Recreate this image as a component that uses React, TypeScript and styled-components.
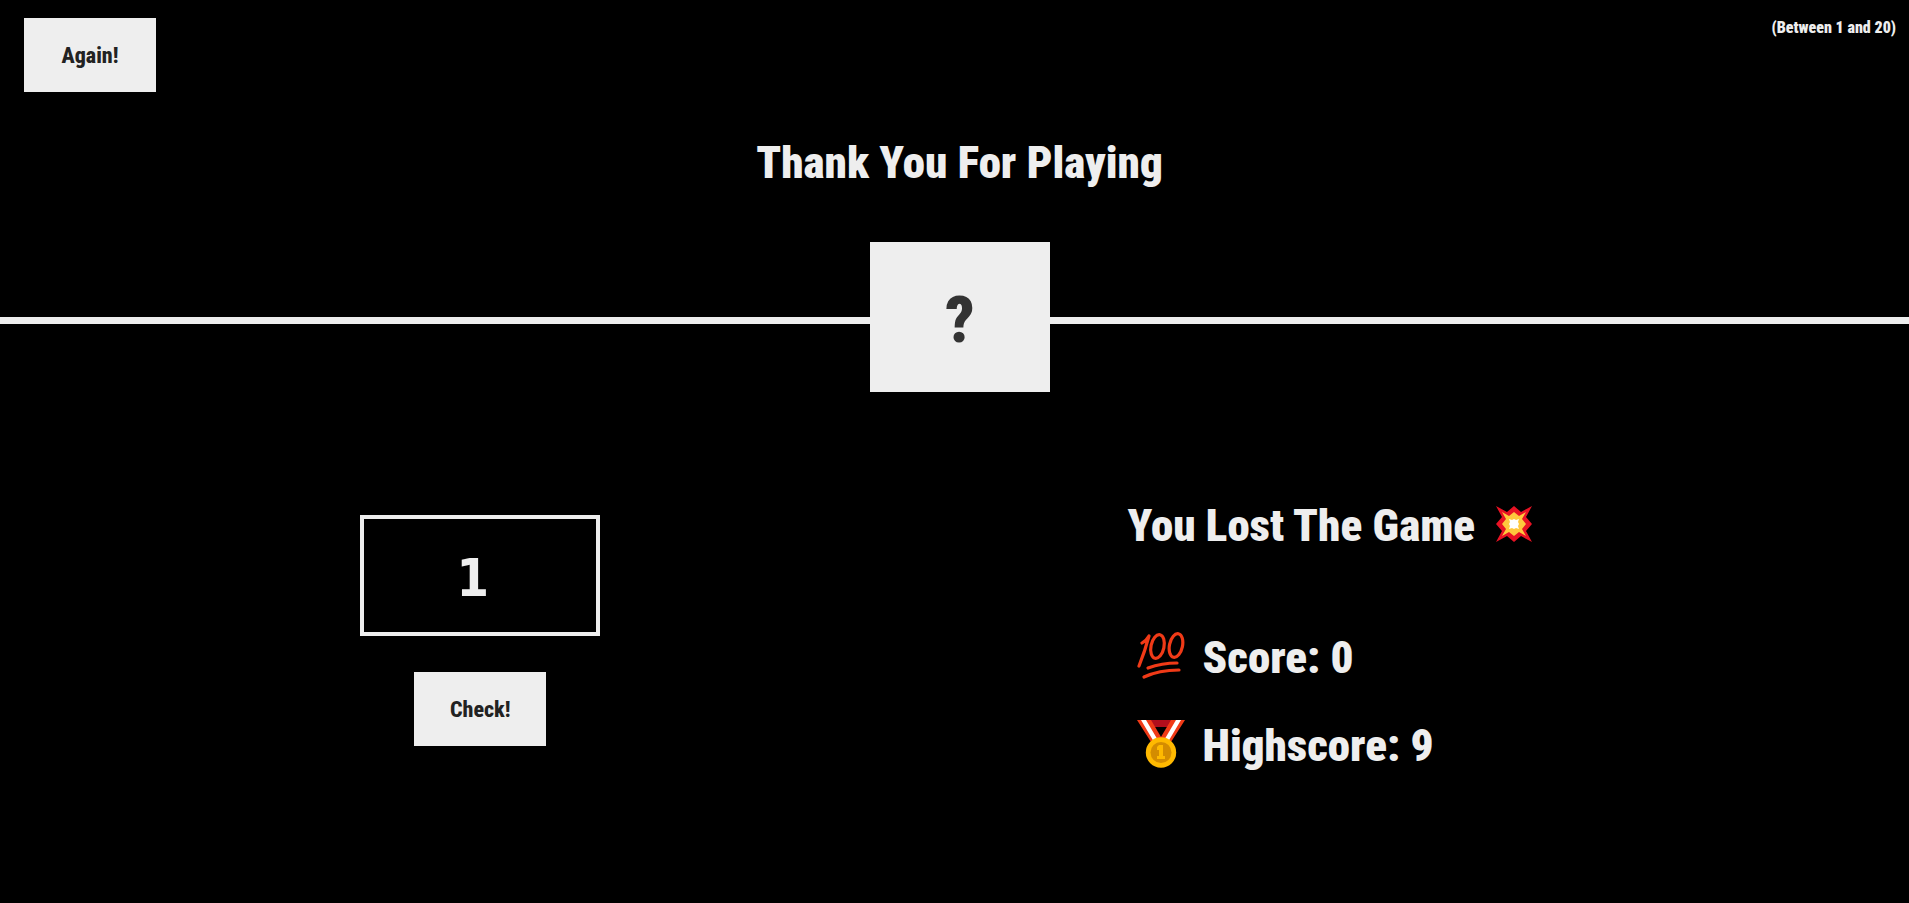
import React, { useState } from "react";
import styled, { createGlobalStyle } from "styled-components";

const GlobalStyle = createGlobalStyle`
  *, *::before, *::after { box-sizing: border-box; margin: 0; padding: 0; }
  body {
    min-height: 100vh;
    background: #000;
    color: #eee;
    font-family: "Roboto Condensed", Roboto, "Liberation Sans", sans-serif;
    font-weight: 900;
  }
`;

const TopBar = styled.div`
  display: flex;
  justify-content: space-between;
  align-items: flex-start;
  padding: 18px 13px 0 24px;
`;

const GameButton = styled.button`
  width: 132px;
  height: 74px;
  border: none;
  background: #eee;
  color: #222;
  font: inherit;
  font-size: 22px;
  font-weight: 800;
  cursor: pointer;

  &:hover { background: #ccc; }
`;

const Range = styled.p`
  font-size: 16px;
  line-height: 20px;
`;

const Title = styled.h1`
  padding: 44px 0 0 10px;
  font-size: 45px;
  font-weight: 900;
  line-height: 54px;
  text-align: center;
`;

const Divider = styled.div`
  display: flex;
  align-items: center;
  margin-top: 52px;
`;

const Line = styled.div<{ $basis: number }>`
  flex: 1 1 ${(p) => p.$basis}px;
  height: 7px;
  margin-top: 7px;
  background: #eee;
`;

const Secret = styled.div`
  display: flex;
  align-items: center;
  justify-content: center;
  width: 180px;
  height: 150px;
  padding-top: 6px;
  background: #eee;
  color: #333;
  font-size: 64px;
`;

const Main = styled.main`
  display: grid;
  grid-template-columns: 1fr 1fr;
  padding-top: 102px;
`;

const GuessPanel = styled.form`
  display: flex;
  flex-direction: column;
  align-items: center;
  gap: 36px;
  padding: 21px 0 0 6px;
`;

const GuessInput = styled.input`
  width: 240px;
  height: 121px;
  padding: 4px 19px 0 4px;
  border: 4px solid #eee;
  background: none;
  color: inherit;
  font-family: "DejaVu Sans Condensed", "DejaVu Sans", sans-serif;
  font-size: 52px;
  font-weight: 700;
  text-align: center;
  outline: none;
`;

const ResultPanel = styled.section`
  padding-left: 173px;
  font-size: 45px;
  line-height: 64px;
`;

const Message = styled.p`
  display: flex;
  align-items: center;
  gap: 20px;
  margin-bottom: 68px;

  svg { margin-bottom: 4px; }
`;

const Stat = styled.p`
  display: flex;
  align-items: center;
  gap: 18px;
  padding-left: 9px;
  margin-bottom: 24px;

  svg { margin-bottom: 4px; }
`;

const Burst = () => (
  <svg width="38" height="38" viewBox="0 0 38 38" aria-hidden="true">
    <path fill="#e81224" d="M1 1 12 7 19 1 26 7 37 1 31 12 37 19 31 26 37 37 26 31 19 37 12 31 1 37 7 26 1 19 7 12Z" />
    <path fill="#ffc83d" d="M7 7 14 11 19 7 24 11 31 7 27 14 31 19 27 24 31 31 24 27 19 31 14 27 7 31 11 24 7 19 11 14Z" />
    <path fill="#fff" d="M14 14 17 15 19 14 21 15 24 14 23 17 24 19 23 21 24 24 21 23 19 24 17 23 14 24 15 21 14 19 15 17Z" />
  </svg>
);

const Hundred = () => (
  <svg width="48" height="48" viewBox="0 0 48 48" fill="none" stroke="#f03a17" strokeWidth="3.200" strokeLinecap="round" strokeLinejoin="round" aria-hidden="true">
    <path d="M5 11Q10 8 12 4Q8 19 2 34" />
    <ellipse cx="20.500" cy="14.500" rx="6.500" ry="12" transform="rotate(12 20.500 14.500)" />
    <ellipse cx="39" cy="13.500" rx="6.500" ry="12" transform="rotate(12 39 13.500)" />
    <path d="M11 36Q25 31 40 31M7 45Q22 38 42 38" />
  </svg>
);

const Medal = () => (
  <svg width="48" height="48" viewBox="0 0 48 48" aria-hidden="true">
    <path fill="#b10e1c" d="M12 0H36V7H12Z" />
    <path fill="#f03a17" d="M0 0H14L27 22H14ZM34 0H48L34 22H21Z" />
    <path fill="#fff" d="M4 0H9L22 22H17ZM39 0H44L31 22H26Z" />
    <circle cx="24" cy="32.500" r="15.200" fill="#ffb900" />
    <circle cx="24" cy="32.500" r="10.500" fill="#d48c00" />
    <path fill="#ffb900" d="M22 25H26V36H28V39H20V36H22V30H20V27Z" />
  </svg>
);

export default function App() {
  const [guess, setGuess] = useState("1");

  return (
    <>
      <GlobalStyle />
      <header>
        <TopBar>
          <GameButton type="button" onClick={() => setGuess("")}>Again!</GameButton>
          <Range>(Between 1 and 20)</Range>
        </TopBar>
        <Title>Thank You For Playing</Title>
        <Divider>
          <Line $basis={11} />
          <Secret>?</Secret>
          <Line $basis={0} />
        </Divider>
      </header>
      <Main>
        <GuessPanel onSubmit={(e) => e.preventDefault()}>
          <GuessInput
            aria-label="Your guess"
            inputMode="numeric"
            value={guess}
            onChange={(e) => setGuess(e.target.value)}
          />
          <GameButton type="submit">Check!</GameButton>
        </GuessPanel>
        <ResultPanel>
          <Message>You Lost The Game <Burst /></Message>
          <Stat><Hundred /><span>Score: 0</span></Stat>
          <Stat><Medal /><span>Highscore: 9</span></Stat>
        </ResultPanel>
      </Main>
    </>
  );
}
